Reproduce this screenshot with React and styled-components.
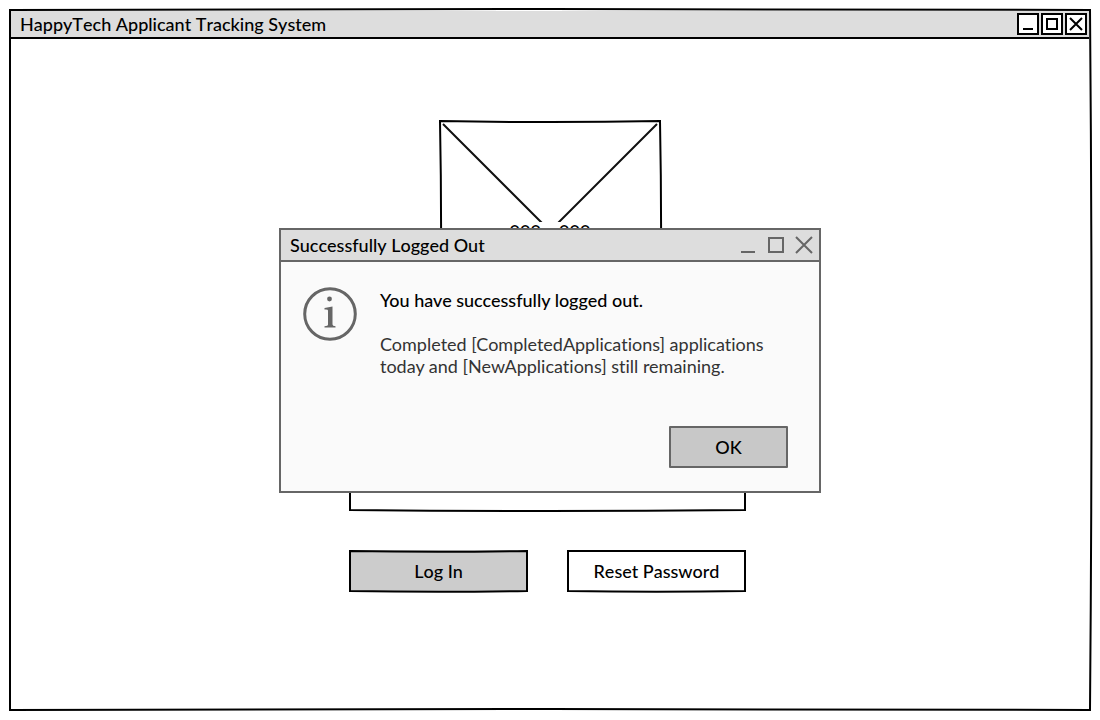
import React from "react";
import styled, { createGlobalStyle } from "styled-components";

const Global = createGlobalStyle`
  * { box-sizing: border-box; }
  body {
    margin: 0;
    background: #fff;
    color: #000;
    font-family: Lato, "Liberation Sans", sans-serif;
    font-size: 18px;
    font-weight: 500;
    line-height: 22px;
    font-kerning: none;
    font-variant-ligatures: none;
  }
  p, h1, h2 { margin: 0; font-size: inherit; font-weight: inherit; }
`;

const Outline = styled.svg`
  position: absolute;
  inset: 1px;
  width: calc(100% - 2px);
  height: calc(100% - 2px);
  overflow: visible;
  pointer-events: none;
  fill: none;
  stroke: #000;
  stroke-width: 2px;
  path { vector-effect: non-scaling-stroke; }
`;

/* Hand-drawn rectangle: each bow is the control-point offset of one side. */
function Sketch({ top = 0, right = 0, bottom = 0, left = 0 }) {
  return (
    <Outline viewBox="0 0 100 100" preserveAspectRatio="none" aria-hidden="true">
      <path
        d={`M0 0Q50 ${top} 100 0Q${100 + right} 50 100 100Q50 ${100 + bottom} 0 100Q${left} 50 0 0Z`}
      />
    </Outline>
  );
}

const Page = styled.div`
  position: relative;
  min-height: 100vh;
  padding: 9px;
  display: flex;
`;

const AppWindow = styled.main`
  position: relative;
  isolation: isolate;
  flex: 1;
  padding: 2px;
`;

const TitleBar = styled.header`
  display: flex;
  align-items: center;
  justify-content: space-between;
  height: 28px;
  padding: 0 2px 0 9px;
  background: #ddd;
  border-bottom: 2px solid #000;
`;

const WindowControls = styled.div`
  display: flex;
  gap: 2px;
`;

const WindowButton = styled.button`
  display: block;
  width: 22px;
  height: 22px;
  padding: 0;
  border: 2px solid #000;
  background: #fff;
  color: #000;
`;

const Glyph = styled.svg`
  display: block;
  fill: none;
  stroke: currentColor;
  stroke-width: 2px;
`;

const Content = styled.div`
  display: flex;
  flex-direction: column;
  align-items: center;
  padding-top: 81px;
`;

const LogoBox = styled.div`
  position: relative;
  display: grid;
  place-items: center;
  width: 222px;
  height: 222px;
`;

const Diagonals = styled.svg`
  grid-area: 1 / 1;
  width: 100%;
  height: 100%;
  stroke: #111;
  stroke-width: 2px;
`;

const LogoSize = styled.span`
  grid-area: 1 / 1;
  z-index: 1;
  background: #fff;
  line-height: 18px;
`;

const LoginForm = styled.form`
  display: flex;
  flex-direction: column;
  gap: 39px;
  width: 397px;
  margin: 20px 5px 0 0;
`;

const Fields = styled.div`
  position: relative;
  height: 149px;
`;

const Actions = styled.div`
  display: grid;
  grid-template-columns: 1fr 1fr;
  gap: 39px;
`;

const SketchButton = styled.button`
  position: relative;
  height: 42px;
  padding: 0;
  border: 0;
  background: ${(p) => (p.$primary ? "#ccc" : "#fff")};
  color: #000;
  font: inherit;
`;

const Overlay = styled.div`
  position: absolute;
  inset: 0;
  display: grid;
  place-items: center;
`;

const Dialog = styled.section`
  width: 542px;
  border: 2px solid #666;
  background: #fafafa;
`;

const DialogHeader = styled.header`
  display: flex;
  align-items: center;
  justify-content: space-between;
  height: 32px;
  padding: 0 5px 0 9px;
  background: #ddd;
  border-bottom: 2px solid #666;
`;

const DialogControls = styled.div`
  display: flex;
  gap: 8px;
`;

const DialogControl = styled.button`
  width: 20px;
  height: 20px;
  padding: 0;
  border: 0;
  background: none;
  color: #666;
`;

const DialogBody = styled.div`
  display: flex;
  gap: 22px;
  padding: 24px 32px 0 21px;
`;

const InfoIcon = styled.svg`
  flex: none;
  width: 56px;
  height: 56px;
`;

const Message = styled.div`
  display: flex;
  flex-direction: column;
  gap: 22px;
  padding-top: 3px;
  font-kerning: normal;
`;

const Details = styled.p`
  font-weight: 400;
  color: #333;
`;

const DialogFooter = styled.footer`
  display: flex;
  justify-content: flex-end;
  padding: 49px 31px 23px;
`;

const OkButton = styled.button`
  width: 119px;
  height: 42px;
  padding: 0;
  border: 2px solid #666;
  border-radius: 1px;
  background: #c8c8c8;
  color: #000;
  font: inherit;
`;

export default function App() {
  return (
    <Page>
      <Global />
      <AppWindow>
        <TitleBar>
          <h1>HappyTech Applicant Tracking System</h1>
          <WindowControls>
            <WindowButton aria-label="Minimize">
              <Glyph width="18" height="18"><path d="M4 14H14" /></Glyph>
            </WindowButton>
            <WindowButton aria-label="Maximize">
              <Glyph width="18" height="18"><path d="M4 4H14V14H4Z" /></Glyph>
            </WindowButton>
            <WindowButton aria-label="Close">
              <Glyph width="18" height="18"><path d="M3 3L15 15M15 3L3 15" /></Glyph>
            </WindowButton>
          </WindowControls>
        </TitleBar>
        <Content>
          <LogoBox>
            <Diagonals viewBox="0 0 222 222" aria-hidden="true">
              <path d="M4 4L218 218M218 4L4 218" />
            </Diagonals>
            <LogoSize>000 x 000</LogoSize>
            <Sketch top={1} right={1} left={1} />
          </LogoBox>
          <LoginForm onSubmit={(e) => e.preventDefault()}>
            <Fields>
              <Sketch bottom={1.4} />
            </Fields>
            <Actions>
              <SketchButton type="submit" $primary>
                Log In
                <Sketch top={4} bottom={4} />
              </SketchButton>
              <SketchButton type="button">
                Reset Password
                <Sketch bottom={4} />
              </SketchButton>
            </Actions>
          </LoginForm>
        </Content>
        <Sketch top={-0.28} right={0.28} bottom={-0.28} />
      </AppWindow>
      <Overlay>
        <Dialog role="dialog" aria-labelledby="dialog-title">
          <DialogHeader>
            <h2 id="dialog-title">Successfully Logged Out</h2>
            <DialogControls>
              <DialogControl aria-label="Minimize">
                <Glyph width="20" height="20"><path d="M3 17H17" /></Glyph>
              </DialogControl>
              <DialogControl aria-label="Maximize">
                <Glyph width="20" height="20"><path d="M3 3H17V17H3Z" /></Glyph>
              </DialogControl>
              <DialogControl aria-label="Close">
                <Glyph width="20" height="20"><path d="M2 2L18 18M18 2L2 18" /></Glyph>
              </DialogControl>
            </DialogControls>
          </DialogHeader>
          <DialogBody>
            <InfoIcon viewBox="0 0 56 56" aria-hidden="true">
              <circle cx="28" cy="28" r="27.5" fill="#fff" />
              <circle cx="28" cy="28" r="25.3" fill="#fafafa" stroke="#666" strokeWidth="3" />
              <circle cx="27.5" cy="13" r="2.4" fill="#666" />
              <path d="M22.5 22L30.5 20.5V38.5Q30.500 40 33.500 40.200V41.500H22.500V40.200Q26 40 26 38.500V24.500Q26 23 22.500 23.500Z" fill="#666" />
            </InfoIcon>
            <Message>
              <p>You have successfully logged out.</p>
              <Details>
                Completed [CompletedApplications] applications
                <br />
                today and [NewApplications] still remaining.
              </Details>
            </Message>
          </DialogBody>
          <DialogFooter>
            <OkButton type="button">OK</OkButton>
          </DialogFooter>
        </Dialog>
      </Overlay>
    </Page>
  );
}
